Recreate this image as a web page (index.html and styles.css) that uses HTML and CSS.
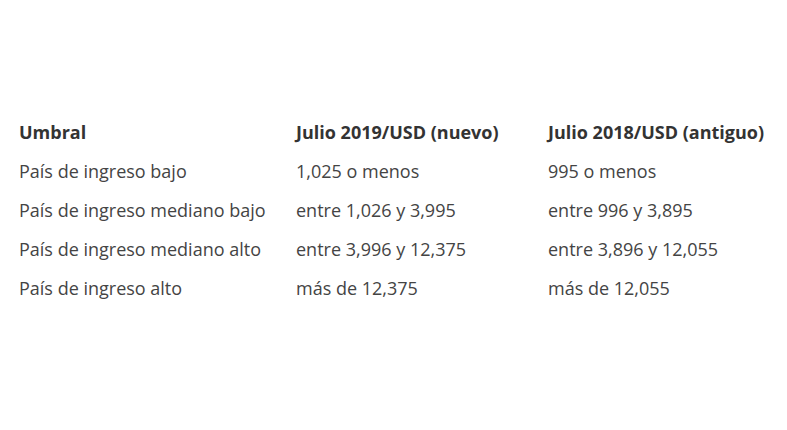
FILE: index.html
```html
<!DOCTYPE html>
<html lang="es">
<head>
<meta charset="utf-8">
<link rel="stylesheet" href="styles.css">
</head>
<body>
<table class="tbl">
<thead>
<tr><th class="c1">Umbral</th><th class="c2">Julio 2019/USD (nuevo)</th><th class="c3">Julio 2018/USD (antiguo)</th></tr>
</thead>
<tbody>
<tr><td>País de ingreso bajo</td><td>1,025 o menos</td><td>995 o menos</td></tr>
<tr><td>País de ingreso mediano bajo</td><td>entre 1,026 y 3,995</td><td>entre 996 y 3,895</td></tr>
<tr><td>País de ingreso mediano alto</td><td>entre 3,996 y 12,375</td><td>entre 3,896 y 12,055</td></tr>
<tr><td>País de ingreso alto</td><td>más de 12,375</td><td>más de 12,055</td></tr>
</tbody>
</table>
</body>
</html>
```
FILE: styles.css
```css
html, body { margin: 0; background: #fff; }
body { padding: 112px 0 0 19px; font-family: "Open Sans", sans-serif; }
.tbl { border-collapse: collapse; font-size: 18px; color: #444; }
.tbl th, .tbl td { padding: 0; height: 39px; text-align: left; vertical-align: middle; white-space: nowrap; }
.tbl th { font-weight: 700; color: #333; }
.c1 { width: 277px; }
.c2 { width: 252px; }
```
